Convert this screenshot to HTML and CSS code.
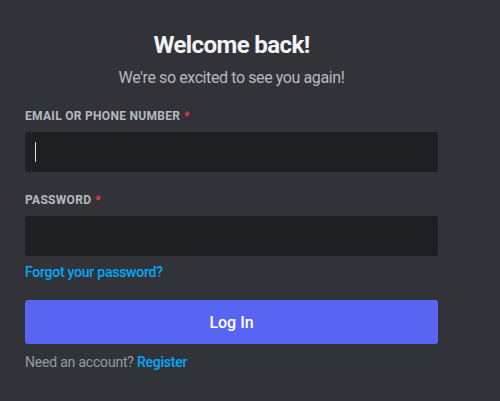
FILE: index.html
```html
<!DOCTYPE html>
<html>
<head>
<meta charset="utf-8">
<link rel="stylesheet" href="styles.css">
</head>
<body>
<main class="auth">
  <h1 class="title">Welcome back!</h1>
  <p class="subtitle">We're so excited to see you again!</p>
  <form class="form">
    <div class="field">
      <label class="label">Email or Phone Number<span class="req">*</span></label>
      <div class="input"><span class="caret"></span></div>
    </div>
    <div class="field">
      <label class="label">Password<span class="req">*</span></label>
      <div class="input"></div>
    </div>
    <a class="link forgot">Forgot your password?</a>
    <button type="button" class="login">Log In</button>
    <div class="need">Need an account? <a class="link">Register</a></div>
  </form>
</main>
</body>
</html>
```
FILE: styles.css
```css
html, body {
  margin: 0;
  padding: 0;
  background: #313338;
  width: 500px;
  height: 401px;
  overflow: hidden;
  font-family: Roboto, "Noto Sans", sans-serif;
}
.auth {
  width: 413px;
  padding: 30px 0 0 25px;
}
.title {
  margin: 0 0 8px;
  font-size: 24px;
  line-height: 30px;
  font-weight: 700;
  letter-spacing: -0.6px;
  color: #f2f3f5;
  text-align: center;
}
.subtitle {
  margin: 0;
  font-size: 16px;
  line-height: 20px;
  letter-spacing: -0.4px;
  color: #b5bac1;
  text-align: center;
}
.form {
  margin-top: 20px;
  display: flex;
  flex-direction: column;
}
.field {
  display: flex;
  flex-direction: column;
  gap: 8px;
  margin-bottom: 20px;
}
.field + .field {
  margin-bottom: 0;
}
.label {
  font-size: 12px;
  line-height: 16px;
  font-weight: 700;
  text-transform: uppercase;
  letter-spacing: 0.3px;
  color: #b5bac1;
}
.req {
  color: #f23f42;
  padding-left: 4px;
}
.input {
  height: 40px;
  background: #1e1f22;
  border-radius: 3px;
  box-sizing: border-box;
  padding: 10px;
  display: flex;
  align-items: center;
}
.caret {
  width: 1px;
  height: 20px;
  background: #dbdee1;
}
.link {
  color: #00a8fc;
  font-size: 14px;
  line-height: 16px;
  font-weight: 500;
  letter-spacing: -0.25px;
}
.forgot {
  margin-top: 6px;
  padding: 2px 0;
  align-self: flex-start;
}
.login {
  margin-top: 18px;
  height: 44px;
  border: 0;
  border-radius: 3px;
  background: #5865f2;
  color: #fff;
  font-family: inherit;
  font-size: 16px;
  font-weight: 500;
}
.need {
  margin-top: 10px;
  font-size: 14px;
  line-height: 16px;
  letter-spacing: -0.2px;
  color: #949ba4;
}
```
